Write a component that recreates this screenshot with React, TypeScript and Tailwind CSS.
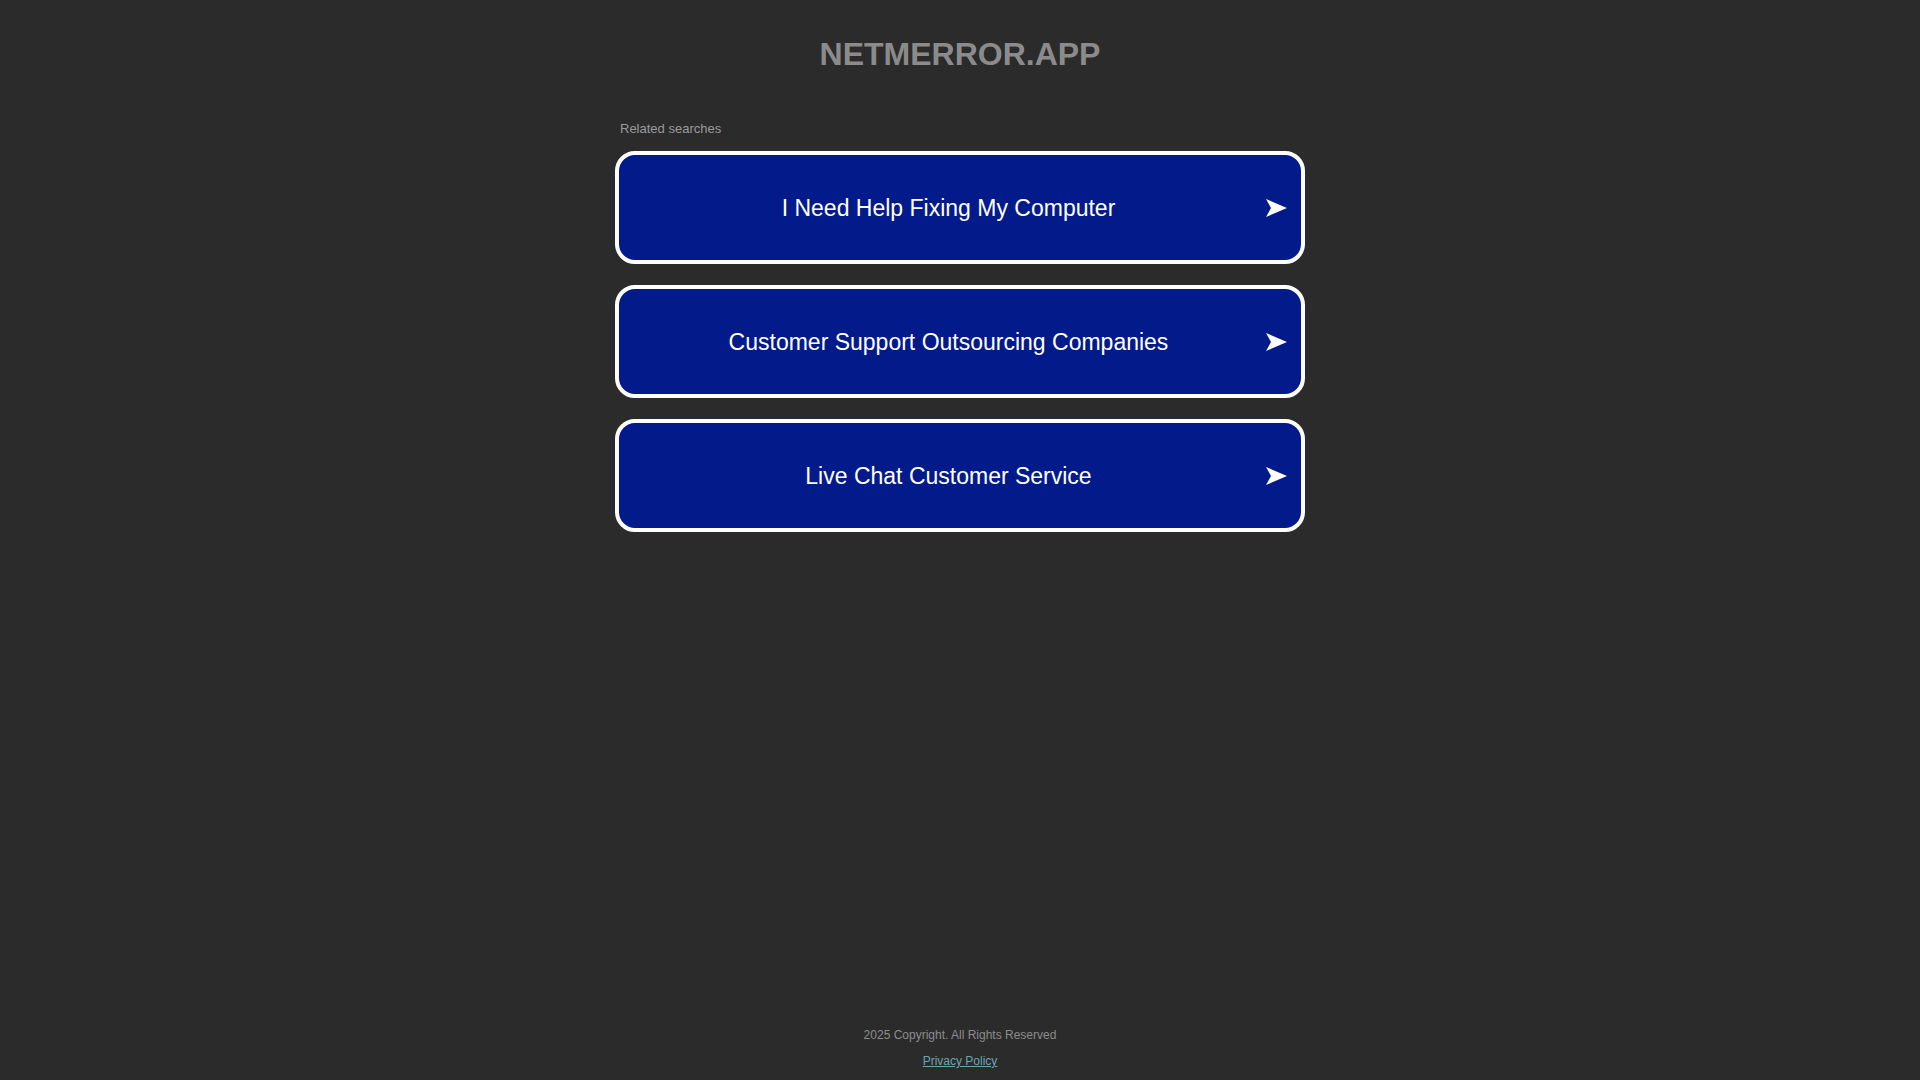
const searches = [
  "I Need Help Fixing My Computer",
  "Customer Support Outsourcing Companies",
  "Live Chat Customer Service",
];

function Arrow() {
  return (
    <svg width="21" height="18" viewBox="0 0 21 18" className="shrink-0">
      <polygon points="0,0 21,9 0,18 5,9" fill="#ffffff" />
    </svg>
  );
}

export default function App() {
  return (
    <div className="min-h-screen flex flex-col bg-[#2b2b2b] font-['Liberation_Sans',Arial,sans-serif]">
      {/* Header */}
      <h1 className="pt-[36px] text-center text-[32px] leading-[36px] font-bold text-[#8b8b8b]">
        NETMERROR.APP
      </h1>

      {/* Related searches */}
      <div className="w-[690px] mx-auto mt-[49px]">
        <p className="pl-[5px] text-[13px] leading-[16px] text-[#9a9a9a]">Related searches</p>

        <ul className="mt-[14px] flex flex-col gap-[21px]">
          {searches.map((s) => (
            <li key={s}>
              <a
                href="#"
                className="h-[113px] flex items-center border-4 border-white rounded-[20px] bg-[#021a8a] pl-[20px] pr-[14px] text-white"
              >
                <span className="flex-1 text-center text-[23px] leading-[28px] pr-[8px]">{s}</span>
                <Arrow />
              </a>
            </li>
          ))}
        </ul>
      </div>

      {/* Footer */}
      <footer className="mt-auto pb-[11px] flex flex-col items-center gap-[10px] text-[12px] leading-[16px]">
        <p className="text-[#8c8c8c]">2025 Copyright. All Rights Reserved</p>
        <a href="#" className="underline text-[#6aa6ae]">
          Privacy Policy
        </a>
      </footer>
    </div>
  );
}
